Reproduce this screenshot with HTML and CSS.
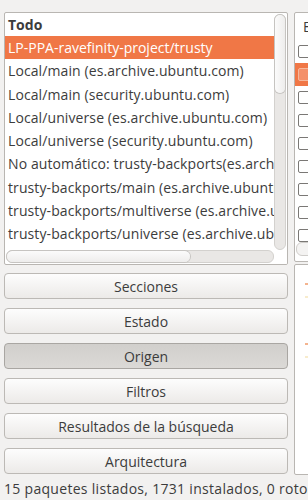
FILE: index.html
```html
<!DOCTYPE html>
<html lang="es">
<head>
    <meta charset="UTF-8">
    <title>Gestor de paquetes Synaptic</title>
    <link rel="stylesheet" href="styles.css">
</head>
<body>
    <div class="window">
        <div class="panes">
            <div class="left">
                <div class="frame filters">
                    <div class="rows">
                        <div class="head">Todo</div>
                        <div class="row selected">LP-PPA-ravefinity-project/trusty</div>
                        <div class="row">Local/main (es.archive.ubuntu.com)</div>
                        <div class="row">Local/main (security.ubuntu.com)</div>
                        <div class="row">Local/universe (es.archive.ubuntu.com)</div>
                        <div class="row">Local/universe (security.ubuntu.com)</div>
                        <div class="row">No automático: trusty-backports(es.archive.ubuntu.com)</div>
                        <div class="row">trusty-backports/main (es.archive.ubuntu.com)</div>
                        <div class="row">trusty-backports/multiverse (es.archive.ubuntu.com)</div>
                        <div class="row">trusty-backports/universe (es.archive.ubuntu.com)</div>
                        <div class="row">trusty-security/main (security.ubuntu.com)</div>
                    </div>
                    <div class="vscroll"><div class="vthumb"></div></div>
                    <div class="hscroll"><div class="hthumb"></div></div>
                    <div class="corner"></div>
                </div>

                <div class="buttons">
                    <button class="btn">Secciones</button>
                    <button class="btn">Estado</button>
                    <button class="btn active">Origen</button>
                    <button class="btn">Filtros</button>
                    <button class="btn">Resultados de la búsqueda</button>
                    <button class="btn">Arquitectura</button>
                </div>
            </div>

            <div class="right">
                <div class="frame packages">
                    <div class="pkg-head">E</div>
                    <div class="pkg-row"><span class="check"></span></div>
                    <div class="pkg-row selected"><span class="check"></span></div>
                    <div class="pkg-row"><span class="check"></span></div>
                    <div class="pkg-row"><span class="check"></span></div>
                    <div class="pkg-row"><span class="check"></span></div>
                    <div class="pkg-row"><span class="check"></span></div>
                    <div class="pkg-row"><span class="check"></span></div>
                    <div class="pkg-row"><span class="check"></span></div>
                    <div class="pkg-row"><span class="check"></span></div>
                    <div class="pkg-scroll"></div>
                </div>
                <div class="frame desc">
                    <span class="mark first"></span>
                    <span class="mark faint"></span>
                    <span class="mark second"></span>
                    <span class="mark faint"></span>
                </div>
            </div>
        </div>

        <div class="status">15 paquetes listados, 1731 instalados, 0 rotos, 0 para instalar/actualizar</div>
    </div>
</body>
</html>
```

FILE: styles.css
```css
body {
    margin: 0;
    width: 308px;
    height: 500px;
    overflow: hidden;
    background-color: #f2f1f0;
    color: #3c3c3c;
    font-family: 'Open Sans', 'DejaVu Sans', sans-serif;
    font-size: 14px;
}

.window {
    padding: 12px 0 0 4px;
    height: 488px;
    display: flex;
    flex-direction: column;
}

.panes {
    display: flex;
    gap: 6px;
    height: 463px;
}

.frame {
    background-color: #fff;
    border: 1px solid #b9b6b2;
    border-radius: 2px;
    box-sizing: border-box;
}

/* lista de filtros */
.left {
    width: 284px;
    flex-shrink: 0;
    display: flex;
    flex-direction: column;
}

.filters {
    height: 253px;
    display: grid;
    grid-template-columns: 1fr 13px;
    grid-template-rows: 1fr 14px;
    overflow: hidden;
}

.rows {
    overflow: hidden;
    white-space: nowrap;
}

.head {
    height: 23px;
    line-height: 23px;
    padding-left: 3px;
    font-weight: bold;
}

.row {
    height: 23.3px;
    line-height: 23px;
    padding-left: 3px;
    letter-spacing: 0.1px;
}

.row.selected {
    background-color: #f07746;
    color: #fff;
    letter-spacing: 0;
}

.vscroll {
    margin: 1px 1px 0 0;
    background-color: #e9e7e5;
    border: 1px solid #d3d1ce;
    border-radius: 6px;
    box-sizing: border-box;
}

.vthumb {
    height: 78px;
    background: linear-gradient(to right, #fbfbfb, #eeedec);
    border-radius: 6px;
    box-shadow: 0 0 0 1px #c6c4c1;
}

.hscroll {
    margin: 0 0 1px 1px;
    background-color: #e9e7e5;
    border: 1px solid #d3d1ce;
    border-radius: 6px;
    box-sizing: border-box;
}

.hthumb {
    width: 183px;
    height: 100%;
    background: linear-gradient(#fbfbfb, #eeedec);
    border-radius: 6px;
    box-shadow: 0 0 0 1px #c6c4c1;
}

.corner {
    background-color: #fff;
}

/* botones */
.buttons {
    margin-top: 8px;
    display: flex;
    flex-direction: column;
    gap: 9px;
}

.btn {
    height: 26px;
    padding: 0;
    font-family: inherit;
    font-size: 14px;
    color: #3c3c3c;
    background: linear-gradient(#fdfdfd, #eceae8);
    border: 1px solid #bcb9b5;
    border-radius: 4px;
}

.btn.active {
    background: linear-gradient(#d1cfcc, #dbd9d6);
    border-color: #a9a6a2;
}

/* lista de paquetes (cortada) */
.right {
    width: 60px;
    flex-shrink: 0;
    display: flex;
    flex-direction: column;
    gap: 2px;
}

.packages {
    height: 250px;
    position: relative;
    overflow: hidden;
}

.pkg-head {
    height: 27px;
    line-height: 27px;
    padding-left: 8px;
}

.pkg-row {
    height: 23px;
    display: flex;
    align-items: center;
    padding-left: 3px;
}

.pkg-row.selected {
    background-color: #f07746;
}

.check {
    width: 11px;
    height: 11px;
    border: 1px solid #7a7875;
    border-radius: 2px;
    background: #fff;
}

.pkg-row.selected .check {
    border-color: #f6b89c;
    background: #f4906a;
}

.pkg-scroll {
    position: absolute;
    left: 1px;
    bottom: 5px;
    width: 40px;
    height: 12px;
    background: #f4f3f2;
    border: 1px solid #cfcdca;
    border-radius: 6px;
}

.desc {
    height: 211px;
    padding-left: 10px;
    display: flex;
    flex-direction: column;
}

.mark {
    width: 3px;
    height: 2px;
    background-color: #f4b48f;
}

.mark.first {
    margin-top: 18px;
}

.mark.faint {
    background-color: #f8eccd;
    margin-top: 11px;
}

.mark.second {
    margin-top: 45px;
}

.status {
    height: 25px;
    line-height: 28px;
    white-space: nowrap;
    letter-spacing: 0.3px;
}
```
